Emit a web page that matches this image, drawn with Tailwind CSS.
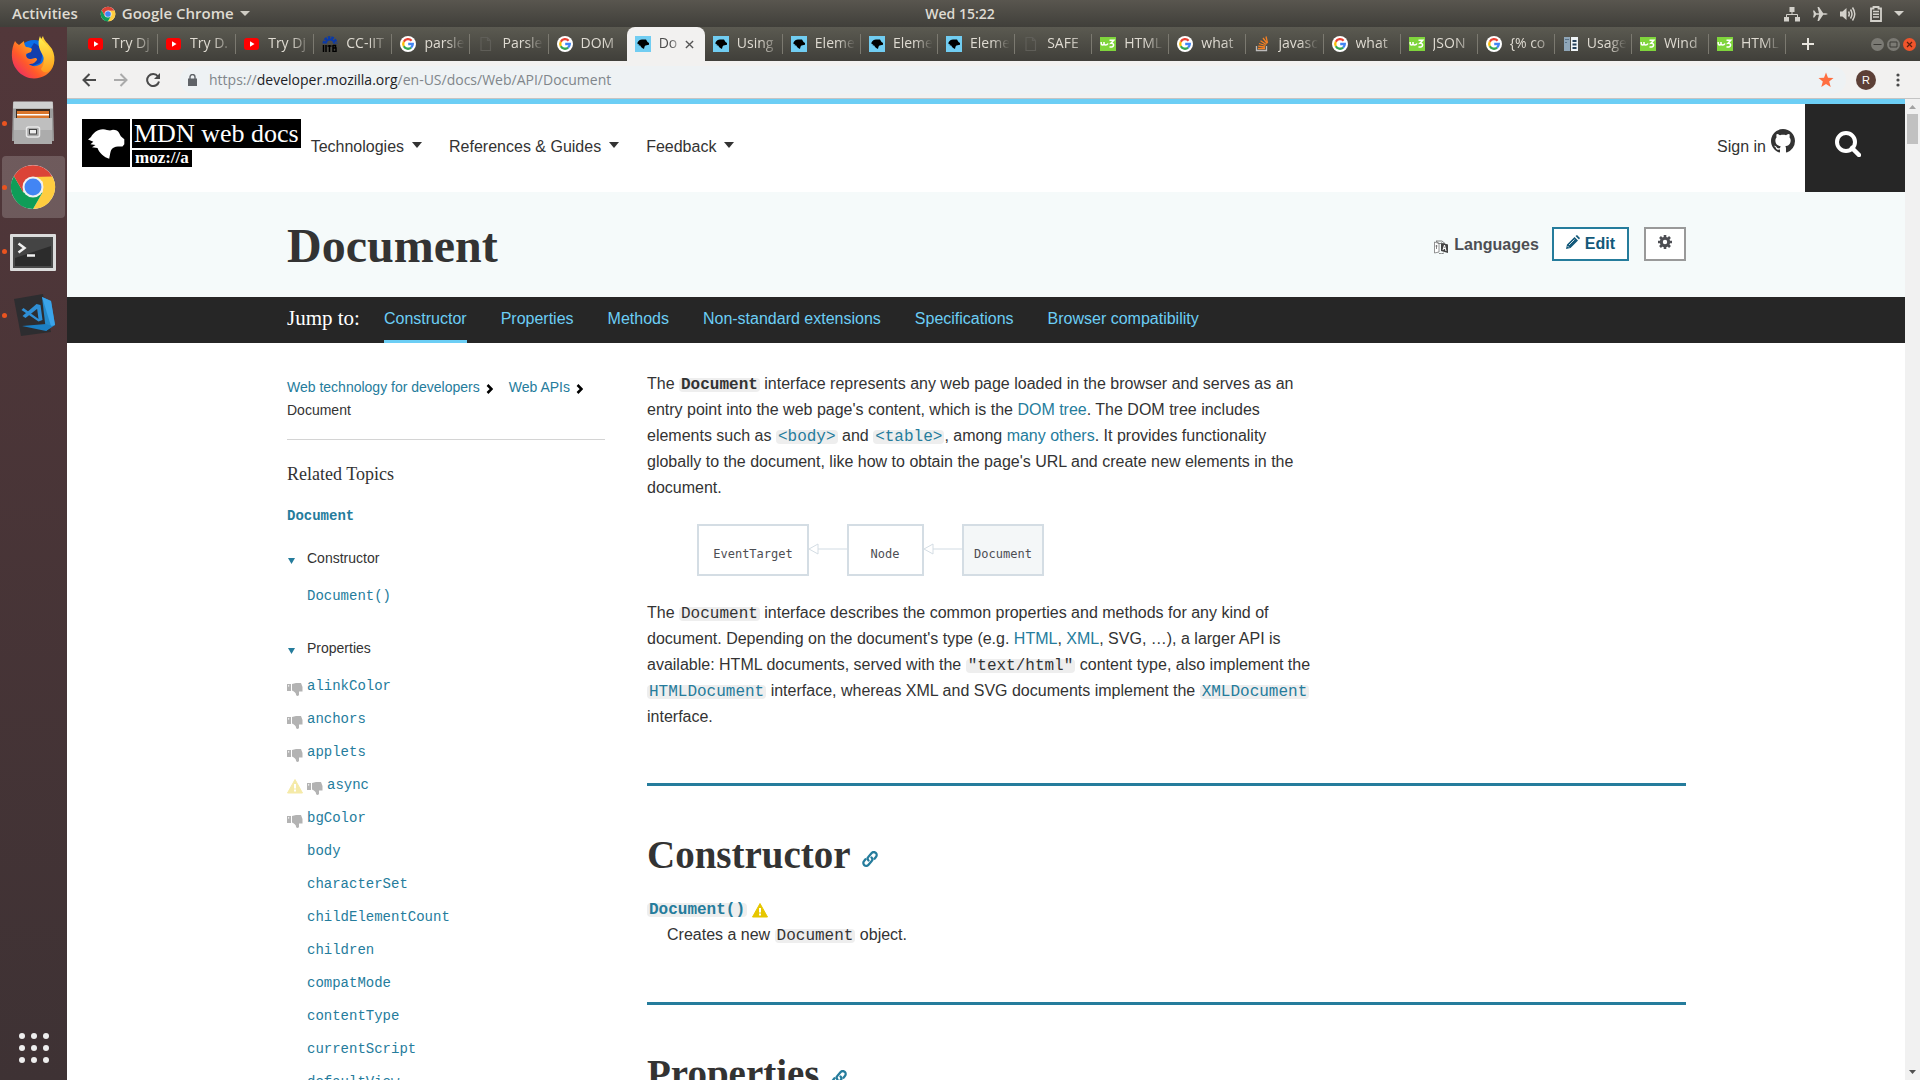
<!DOCTYPE html>
<html lang="en">
<head>
<meta charset="utf-8">
<title>Document - Web APIs | MDN</title>
<script src="https://cdn.jsdelivr.net/npm/@tailwindcss/browser@4"></script>
</head>
<body class="flex h-screen flex-col overflow-hidden bg-white font-['Liberation_Sans',sans-serif] text-base text-[#333]">

<!-- Shared symbols -->
<svg class="hidden" aria-hidden="true">
  <symbol id="i-yt" viewBox="0 0 16 16"><rect y="2" width="15" height="12" rx="3" fill="#f00"/><path d="M6 5.300l4.500 2.700L6 10.700z" fill="#fff"/></symbol>
  <symbol id="i-g" viewBox="0 0 16 16"><circle cx="8" cy="8" r="8" fill="#fff"/><g fill="none" stroke-width="2.300"><path d="M11.600 4.700A4.800 4.800 0 0 0 3.800 5.700" stroke="#ea4335"/><path d="M3.800 5.700a4.800 4.800 0 0 0 0 4.600" stroke="#fbbc05"/><path d="M3.800 10.300a4.800 4.800 0 0 0 7.300 1.300" stroke="#34a853"/><path d="M11.100 11.600A4.800 4.800 0 0 0 12.800 8H8.200" stroke="#4285f4"/></g></symbol>
  <symbol id="i-dino" viewBox="0 0 48 48"><path d="M6 20.500L9 18C11 14 15 10.500 21 10.200c3 0 5 1.300 7 1.300l3-.8c3 0 5 1.300 6 3l1.800 3.600 3.500 3v5L40.500 27.500H36c-3 0-5.500 1.200-6.800 3.500-1 2-1.200 5-2 8.800C22 38 17.500 34.500 15.500 29L10 28.300l3.500-2.300-5-.8 2.800-2.400z" fill="currentColor"/></symbol>
  <symbol id="i-mdn" viewBox="0 0 16 16"><path fill="#71cdf2" d="M0 0h16v16H0z"/><path d="M2.500 6.500C3.500 4.500 5 3.500 7 3.500h4L12.500 6 14 7v1.800l-3.500.6C9.500 10 9.300 11.500 9 13 7 12.300 5.800 11 5.200 9.500L3.500 9.200l.8-.8L2.500 8z"/></symbol>
  <symbol id="i-w3" viewBox="0 0 16 16"><path fill="#7fd53c" d="M0 1h16v14H0z"/><path d="M1.200 6v1.500c0 2 2.800 2 2.800 0V6v1.500c0 2 3 2 4 0M9.500 4.300h4.200L11 7.200c3.800-.5 3.500 5-1.500 3.500" fill="none" stroke="#fff" stroke-width="1.500"/></symbol>
  <symbol id="i-file" viewBox="0 0 16 16"><path d="M3 1.500h6.500l3 3v10H3zM9.500 1.500v3h3" fill="none" stroke="#5f5e58" stroke-width="1.200"/></symbol>
  <symbol id="i-iitb" viewBox="0 0 16 16"><path d="M2 7.500a6 6 0 0 1 12 0" fill="none" stroke="#0b3aa8" stroke-width="3" stroke-dasharray="2.500 1"/><path d="M4 7.500a4 4 0 0 1 8 0" fill="none" stroke="#0b3aa8" stroke-width="2"/><path d="M1.500 9v7M4 9v7M5.500 10h4M7.500 9v7M11 9v7M11 9.500h2.500v2.500H11h3v3.500h-3" fill="none" stroke="#000" stroke-width="1.500"/></symbol>
  <symbol id="i-so" viewBox="0 0 16 16"><path d="M2.500 10v4.500h10V10" fill="none" stroke="#bcbbbb" stroke-width="1.300"/><path d="M4 12.500h7M4.200 10.200l6.800.8M5 7.500l6.500 2M6.500 4.800l5.800 3.700M9 2l4.200 5.500M12 .5l1.500 6.500" stroke="#f48024" stroke-width="1.300"/></symbol>
  <symbol id="i-usage" viewBox="0 0 16 16"><path fill="#8fa6b8" d="M1 1h6v14H1z"/><path fill="#eef3f6" d="M8 1h7v14H8z"/><path d="M2.500 3h1v1h-1zM4.500 3h1v1h-1zM2.500 6h1v1h-1zM9.500 4h4v2h-4zM9.500 7.500h4v2h-4zM9.500 11h4v2h-4z" fill="#26415a"/></symbol>
  <symbol id="i-chrome" viewBox="0 0 48 48"><circle cx="24" cy="24" r="22" fill="#fff"/><path d="M43.100 13A22 22 0 0 1 24 46L33.500 29.500 33.500 18.500 24 13z" fill="#ffcd40"/><path d="M4.900 13A22 22 0 0 0 24 46l9.500-16.500H24L14.500 29.500z" fill="#0f9d58"/><path d="M4.900 13A22 22 0 0 1 43.100 13.500L24 14 14 29z" fill="#db4437"/><circle cx="24" cy="24" r="10.500" fill="#f1f1f1"/><circle cx="24" cy="24" r="8.500" fill="#4285f4"/></symbol>
  <symbol id="i-thumb" viewBox="0 0 16 16"><path d="M0 3h4v7H0zM5 3l4-1h5l1.500 4v4.500H12V14c-1 1.500-3 1-3-.5 0-2-2-3-4-4z" fill="#b3b3b3"/><path d="M1 4.200h1.200v1.200H1z" fill="#fff"/></symbol>
  <symbol id="i-warn" viewBox="0 0 16 16"><path d="M8 1.500L15.500 15H.5z" fill="currentColor" stroke="currentColor" stroke-linejoin="round"/><path d="M7 6h2v4.500H7zM7 11.500h2v2H7z" fill="#fff"/></symbol>
  <symbol id="i-link" viewBox="0 0 16 16"><g fill="none" stroke="currentColor" stroke-width="2.300" stroke-linecap="round"><path d="M6.500 9.500a2.700 2.700 0 0 1 0-3.800l3.200-3.600a2.800 2.800 0 0 1 4.200 3.900L12.500 7.700"/><path d="M9.500 6.500a2.700 2.700 0 0 1 0 3.800l-3.200 3.600a2.800 2.800 0 0 1-4.200-3.900L3.500 8.300"/></g></symbol>
</svg>

<!-- Desktop top bar -->
<header class="flex h-[27px] shrink-0 items-center bg-linear-to-b from-[#59564f] to-[#403f3a] px-3 font-['Open_Sans',sans-serif] text-[14px] font-semibold text-[#dfdbd2]">
  <div class="flex flex-1 items-center text-[15px]">
    <button class="mr-[22px]">Activities</button>
    <svg class="mr-1.5 size-4"><use href="#i-chrome"/></svg>
    <button class="flex items-center gap-1.5">Google Chrome<svg class="h-[5px] w-[10px]" viewBox="0 0 10 5"><path d="M0 0h10L5 5z" fill="#cfccc4"/></svg></button>
  </div>
  <time>Wed 15:22</time>
  <div class="flex flex-1 items-center justify-end gap-3 text-[#d3d1cb]">
    <svg class="size-4" viewBox="0 0 16 16" fill="currentColor"><path d="M5.500 1h5v5h-5zM0 11h5v4.500H0zM11 11h5v4.500h-5z"/><path d="M8 5v4M2.500 11V8.500h11V11" fill="none" stroke="currentColor"/></svg>
    <svg class="size-4" viewBox="0 0 16 16" fill="currentColor"><path d="M1 4.500h1.300l2 2.700H7L5.500 1H7l4.200 6.200H14l2 .8-2 .8h-2.800L7 15H5.500L7 8.800H4.300l-2 2.700H1L1.800 8z"/></svg>
    <svg class="size-4" viewBox="0 0 16 16"><path d="M0 5.500h2.500L6.500 2v12l-4-3.500H0z" fill="currentColor"/><path d="M8.500 5.500q1.500 2.500 0 5M10.500 3.500q3 4.500 0 9M12.500 1.500q4.500 6.500 0 13" fill="none" stroke="currentColor" stroke-width="1.500"/></svg>
    <svg class="ml-0.5 h-4 w-3" viewBox="0 0 12 16"><path d="M1 2.500h2.500V1h5v1.500H11V15H1z" fill="none" stroke="currentColor" stroke-width="1.800"/><path d="M3 5.500h6M3 8.300h6M3 11.100h6" stroke="currentColor" stroke-width="1.500"/></svg>
    <svg class="mr-1 h-[5px] w-[10px]" viewBox="0 0 10 5"><path d="M0 0h10L5 5z" fill="currentColor"/></svg>
  </div>
</header>

<div class="flex min-h-0 flex-1">
  <!-- Dock -->
  <nav aria-label="Dock" class="flex w-[67px] shrink-0 flex-col bg-linear-to-b from-[#52373a] to-[#3e3234]">
    <a href="#" aria-label="Firefox" class="flex h-16 items-center justify-center">
      <svg class="size-12" viewBox="0 0 48 48"><defs><linearGradient id="fx" x1="1" y1="0" x2="0" y2="1"><stop offset="0" stop-color="#fff04a"/><stop offset=".35" stop-color="#ffb01e"/><stop offset=".65" stop-color="#ff5a2a"/><stop offset="1" stop-color="#e5197e"/></linearGradient><linearGradient id="fy" x1="0" y1="0" x2="0" y2="1"><stop offset="0" stop-color="#fff44f"/><stop offset="1" stop-color="#ff9a1e"/></linearGradient></defs><circle cx="24" cy="22" r="17" fill="#0a6fe8"/><path d="M24 8c8 3 10 12 6 20l-10 4-6-8z" fill="#123fae"/><path d="M5 6c1 2 3 3 4 4l5-4c0 3 1 5 2 6 3 0 5 1 6 2l-1 3-5 2c0 4 2 5 5 5l4-1c2 0 3 2 1 3-2 3-5 3-7 3 4 4 12 2 14-3 3-7-1-10-3-13-2-6 2-10 3-12 1 5 5 7 9 13 5 10 2 21-6 26-10 6-22 4-29-5C0 27 1 14 5 6z" fill="url(#fx)"/><path d="M30 1c1 5 7 8 10 13 3 6 4 15 0 21-4 4-8 2-9-1 5-7 3-12 0-17-3-6-3-11-1-16z" fill="url(#fy)"/></svg>
    </a>
    <a href="#" aria-label="Files" class="flex h-16 items-center gap-[5px]">
      <span class="ml-0.5 size-[5px] rounded-full bg-[#e95420]"></span>
      <svg class="h-[44px] w-[42px]" viewBox="0 0 42 44"><path d="M1 1h40l1 39H0z" fill="#9d9d9d"/><path d="M1.500.5h39l.5 7H1z" fill="#d0d0d0"/><path d="M4 8h34v10H4z" fill="#3a2a20"/><path d="M5 10h32v8H5z" fill="#d9752b"/><path d="M5 13h32v1.500H5z" fill="#fff"/><path d="M2 17h38v26H2z" fill="#acacac"/><path d="M2 17h38v12H2z" fill="#bfbfbf"/><rect x="14.500" y="26" width="13" height="10" rx="2" fill="#aaa" stroke="#e8e8e8" stroke-width="1.500"/><rect x="17.500" y="28.500" width="7" height="4.500" fill="#eee" stroke="#444"/></svg>
    </a>
    <a href="#" aria-label="Google Chrome" class="mx-0.5 my-px flex h-[62px] items-center rounded bg-white/18">
      <span class="size-[5px] rounded-full bg-[#e95420]"></span>
      <svg class="ml-0.5 size-12"><use href="#i-chrome"/></svg>
    </a>
    <a href="#" aria-label="Terminal" class="flex h-16 items-center gap-[3px]">
      <span class="ml-0.5 size-[5px] rounded-full bg-[#e95420]"></span>
      <svg class="mt-1 h-[38px] w-[46px]" viewBox="0 0 46 38"><rect width="46" height="37" rx="1" fill="#dcdcdc"/><path d="M3 3h40v31H3z" fill="#4a4a4a"/><path d="M5 5h36v27H5z" fill="#2c2c2c"/><path d="M5 5h36v7L5 24z" fill="#444"/><path d="M8.500 9.500l6 4.500-6 4.500M17 21.500h8" fill="none" stroke="#f0f0f0" stroke-width="2.500"/></svg>
    </a>
    <a href="#" aria-label="Visual Studio Code" class="flex h-16 items-center gap-1.5">
      <span class="ml-0.5 size-[5px] rounded-full bg-[#e95420]"></span>
      <svg class="h-[44px] w-[44px]" viewBox="0 0 44 44"><path d="M1 6L30 1l8 38L8 43z" fill="#2d2d30"/><path d="M29 4l9 4 4 24-9 6z" fill="#2489ca"/><path d="M29 4l9 4 4 24-4 1z" fill="#3ba4ea"/><path d="M9 33l24-2 6 2-6 5z" fill="#1b7fc4"/><path d="M23.500 11l4 1 2 15-4 1.500L8.500 17l2-2 15 11zM23.500 11l3 3-14 11-3-2z" fill="#2f8fd6"/></svg>
    </a>
    <button aria-label="Show applications" class="mt-auto flex h-16 items-center justify-center">
      <svg class="size-[30px]" viewBox="0 0 30 30" fill="#eee"><circle cx="3" cy="3" r="3"/><circle cx="15" cy="3" r="3"/><circle cx="27" cy="3" r="3"/><circle cx="3" cy="15" r="3"/><circle cx="15" cy="15" r="3"/><circle cx="27" cy="15" r="3"/><circle cx="3" cy="27" r="3"/><circle cx="15" cy="27" r="3"/><circle cx="27" cy="27" r="3"/></svg>
    </button>
  </nav>

  <!-- Browser window -->
  <div class="flex min-w-0 flex-1 flex-col">
    <!-- Tab strip -->
    <div class="flex h-[34px] shrink-0 bg-linear-to-b from-[#5b5a51] to-[#403f3a] pl-[13px] font-['Open_Sans',sans-serif] text-[14px]/[32px] text-[#dfdbd2]">
      <div class="flex min-w-0 flex-1">
        <div class="flex min-w-0 flex-[78] items-center"><svg class="mx-2 size-4 shrink-0"><use href="#i-yt"/></svg><span class="flex-1 overflow-hidden pb-0.5 whitespace-nowrap [mask-image:linear-gradient(to_right,black_50%,transparent_100%)]">Try Dj</span><i class="h-5 w-px bg-[#7b7970]"></i></div>
        <div class="flex min-w-0 flex-[78] items-center"><svg class="mx-2 size-4 shrink-0"><use href="#i-yt"/></svg><span class="flex-1 overflow-hidden pb-0.5 whitespace-nowrap [mask-image:linear-gradient(to_right,black_50%,transparent_100%)]">Try D.</span><i class="h-5 w-px bg-[#7b7970]"></i></div>
        <div class="flex min-w-0 flex-[78] items-center"><svg class="mx-2 size-4 shrink-0"><use href="#i-yt"/></svg><span class="flex-1 overflow-hidden pb-0.5 whitespace-nowrap [mask-image:linear-gradient(to_right,black_50%,transparent_100%)]">Try Dj</span><i class="h-5 w-px bg-[#7b7970]"></i></div>
        <div class="flex min-w-0 flex-[78] items-center"><svg class="mx-2 size-4 shrink-0"><use href="#i-iitb"/></svg><span class="flex-1 overflow-hidden pb-0.5 whitespace-nowrap [mask-image:linear-gradient(to_right,black_50%,transparent_100%)]">CC-IIT</span><i class="h-5 w-px bg-[#7b7970]"></i></div>
        <div class="flex min-w-0 flex-[78] items-center"><svg class="mx-2 size-4 shrink-0"><use href="#i-g"/></svg><span class="flex-1 overflow-hidden pb-0.5 whitespace-nowrap [mask-image:linear-gradient(to_right,black_50%,transparent_90%)]">parsle</span><i class="h-5 w-px bg-[#7b7970]"></i></div>
        <div class="flex min-w-0 flex-[78] items-center"><svg class="mx-2 size-4 shrink-0"><use href="#i-file"/></svg><span class="flex-1 overflow-hidden pb-0.5 whitespace-nowrap [mask-image:linear-gradient(to_right,black_50%,transparent_90%)]">Parsle</span><i class="h-5 w-px bg-[#7b7970]"></i></div>
        <div class="flex min-w-0 flex-[78] items-center"><svg class="mx-2 size-4 shrink-0"><use href="#i-g"/></svg><span class="flex-1 overflow-hidden pb-0.5 whitespace-nowrap [mask-image:linear-gradient(to_right,black_50%,transparent_110%)]">DOM</span></div>
        <div class="flex min-w-0 flex-[78] items-center rounded-t-lg bg-[#f2f1f0] text-[#4c4c4c]"><svg class="mx-2 size-4 shrink-0"><use href="#i-mdn"/></svg><span class="flex-1 overflow-hidden pb-0.5 whitespace-nowrap [mask-image:linear-gradient(to_right,black_50%,transparent_110%)]">Do</span><button aria-label="Close tab" class="mr-[11px] ml-1"><svg class="size-[9px]" viewBox="0 0 10 10"><path d="M1 1l8 8M9 1L1 9" stroke="#555" stroke-width="1.500"/></svg></button></div>
        <div class="flex min-w-0 flex-[78] items-center"><svg class="mx-2 size-4 shrink-0"><use href="#i-mdn"/></svg><span class="flex-1 overflow-hidden pb-0.5 whitespace-nowrap [mask-image:linear-gradient(to_right,black_50%,transparent_100%)]">Using</span><i class="h-5 w-px bg-[#7b7970]"></i></div>
        <div class="flex min-w-0 flex-[78] items-center"><svg class="mx-2 size-4 shrink-0"><use href="#i-mdn"/></svg><span class="flex-1 overflow-hidden pb-0.5 whitespace-nowrap [mask-image:linear-gradient(to_right,black_50%,transparent_90%)]">Eleme</span><i class="h-5 w-px bg-[#7b7970]"></i></div>
        <div class="flex min-w-0 flex-[77] items-center"><svg class="mx-2 size-4 shrink-0"><use href="#i-mdn"/></svg><span class="flex-1 overflow-hidden pb-0.5 whitespace-nowrap [mask-image:linear-gradient(to_right,black_50%,transparent_90%)]">Eleme</span><i class="h-5 w-px bg-[#7b7970]"></i></div>
        <div class="flex min-w-0 flex-[77] items-center"><svg class="mx-2 size-4 shrink-0"><use href="#i-mdn"/></svg><span class="flex-1 overflow-hidden pb-0.5 whitespace-nowrap [mask-image:linear-gradient(to_right,black_50%,transparent_90%)]">Eleme</span><i class="h-5 w-px bg-[#7b7970]"></i></div>
        <div class="flex min-w-0 flex-[77] items-center"><svg class="mx-2 size-4 shrink-0"><use href="#i-file"/></svg><span class="flex-1 overflow-hidden pb-0.5 whitespace-nowrap [mask-image:linear-gradient(to_right,black_50%,transparent_110%)]">SAFE</span><i class="h-5 w-px bg-[#7b7970]"></i></div>
        <div class="flex min-w-0 flex-[77] items-center"><svg class="mx-2 size-4 shrink-0"><use href="#i-w3"/></svg><span class="flex-1 overflow-hidden pb-0.5 whitespace-nowrap [mask-image:linear-gradient(to_right,black_50%,transparent_90%)]">HTML</span><i class="h-5 w-px bg-[#7b7970]"></i></div>
        <div class="flex min-w-0 flex-[77] items-center"><svg class="mx-2 size-4 shrink-0"><use href="#i-g"/></svg><span class="flex-1 overflow-hidden pb-0.5 whitespace-nowrap [mask-image:linear-gradient(to_right,black_50%,transparent_110%)]">what</span><i class="h-5 w-px bg-[#7b7970]"></i></div>
        <div class="flex min-w-0 flex-[77] items-center"><svg class="mx-2 size-4 shrink-0"><use href="#i-so"/></svg><span class="flex-1 overflow-hidden pb-0.5 whitespace-nowrap [mask-image:linear-gradient(to_right,black_50%,transparent_90%)]">javasc</span><i class="h-5 w-px bg-[#7b7970]"></i></div>
        <div class="flex min-w-0 flex-[77] items-center"><svg class="mx-2 size-4 shrink-0"><use href="#i-g"/></svg><span class="flex-1 overflow-hidden pb-0.5 whitespace-nowrap [mask-image:linear-gradient(to_right,black_50%,transparent_110%)]">what</span><i class="h-5 w-px bg-[#7b7970]"></i></div>
        <div class="flex min-w-0 flex-[77] items-center"><svg class="mx-2 size-4 shrink-0"><use href="#i-w3"/></svg><span class="flex-1 overflow-hidden pb-0.5 whitespace-nowrap [mask-image:linear-gradient(to_right,black_50%,transparent_100%)]">JSON</span><i class="h-5 w-px bg-[#7b7970]"></i></div>
        <div class="flex min-w-0 flex-[77] items-center"><svg class="mx-2 size-4 shrink-0"><use href="#i-g"/></svg><span class="flex-1 overflow-hidden pb-0.5 whitespace-nowrap [mask-image:linear-gradient(to_right,black_50%,transparent_110%)]">{% co</span><i class="h-5 w-px bg-[#7b7970]"></i></div>
        <div class="flex min-w-0 flex-[77] items-center"><svg class="mx-2 size-4 shrink-0"><use href="#i-usage"/></svg><span class="flex-1 overflow-hidden pb-0.5 whitespace-nowrap [mask-image:linear-gradient(to_right,black_50%,transparent_90%)]">Usage</span><i class="h-5 w-px bg-[#7b7970]"></i></div>
        <div class="flex min-w-0 flex-[77] items-center"><svg class="mx-2 size-4 shrink-0"><use href="#i-w3"/></svg><span class="flex-1 overflow-hidden pb-0.5 whitespace-nowrap [mask-image:linear-gradient(to_right,black_50%,transparent_110%)]">Wind</span><i class="h-5 w-px bg-[#7b7970]"></i></div>
        <div class="flex min-w-0 flex-[77] items-center"><svg class="mx-2 size-4 shrink-0"><use href="#i-w3"/></svg><span class="flex-1 overflow-hidden pb-0.5 whitespace-nowrap [mask-image:linear-gradient(to_right,black_50%,transparent_90%)]">HTML</span><i class="h-5 w-px bg-[#7b7970]"></i></div>
      </div>
      <div class="flex w-[134px] items-center pr-1 pl-4">
        <button aria-label="New tab"><svg class="size-3" viewBox="0 0 12 12"><path d="M6 0v12M0 6h12" stroke="#e8e5de" stroke-width="2"/></svg></button>
        <div class="ml-auto flex gap-[3px]">
          <button aria-label="Minimize" class="size-[13px]"><svg viewBox="0 0 13 13"><circle cx="6.500" cy="6.500" r="6.500" fill="#7b7a74"/><path d="M2.500 6.500h8" stroke="#3c3b37"/></svg></button>
          <button aria-label="Maximize" class="size-[13px]"><svg viewBox="0 0 13 13"><circle cx="6.500" cy="6.500" r="6.500" fill="#7b7a74"/><path d="M3 4h7v5H3z" fill="none" stroke="#3c3b37"/></svg></button>
          <button aria-label="Close" class="size-[13px]"><svg viewBox="0 0 13 13"><circle cx="6.500" cy="6.500" r="6.500" fill="#f0542b"/><path d="M4 4l5 5M9 4L4 9" stroke="#5b2010" stroke-width="1.200"/></svg></button>
        </div>
      </div>
    </div>

    <!-- Toolbar -->
    <div class="flex h-[38px] shrink-0 items-center border-b border-[#c4c4c4] bg-[#f2f1f0] pr-5 pl-[15px]">
      <button aria-label="Back"><svg class="size-[14px]" viewBox="0 0 14 14"><path d="M14 7H1.500M7.500 1l-6 6 6 6" fill="none" stroke="#4a4a4a" stroke-width="2"/></svg></button>
      <button aria-label="Forward" class="ml-[18px]"><svg class="size-[14px]" viewBox="0 0 14 14"><path d="M0 7h12.500M6.500 1l6 6-6 6" fill="none" stroke="#aaa" stroke-width="2"/></svg></button>
      <button aria-label="Reload" class="ml-[18px]"><svg class="size-[14px]" viewBox="0 0 14 14"><path d="M12 3.500A6 6 0 1 0 13 8.500" fill="none" stroke="#4a4a4a" stroke-width="2"/><path d="M14 0v6H8z" fill="#4a4a4a"/></svg></button>
      <div class="ml-5 flex h-7 flex-1 items-center rounded-full bg-[#eef2f4] pr-3 pl-2">
        <svg class="mr-3 h-3 w-[9px] shrink-0" viewBox="0 0 9 12"><path d="M0 4.500h9V12H0z" fill="#5f6368"/><path d="M2 5V3a2.500 2.500 0 0 1 5 0v2" fill="none" stroke="#5f6368" stroke-width="1.400"/></svg>
        <div class="flex-1 font-['Open_Sans',sans-serif] text-[14px] whitespace-nowrap text-[#80868b]">https://<span class="text-[#202124]">developer.mozilla.org</span>/en-US/docs/Web/API/Document</div>
        <svg class="size-4" viewBox="0 0 16 16"><path d="M8 .5l2 5.300 5.500.2-4.300 3.500 1.500 5.500L8 12l-4.700 3 1.500-5.500L.5 6 6 5.800z" fill="#ff6e40"/></svg>
      </div>
      <button aria-label="Profile" class="ml-2.5 size-5 rounded-full bg-[#5d4037] text-[11px]/5 text-white">R</button>
      <button aria-label="Menu" class="ml-5"><svg class="h-[14px] w-1" viewBox="0 0 4 14" fill="#4a4a4a"><circle cx="2" cy="2" r="1.600"/><circle cx="2" cy="7" r="1.600"/><circle cx="2" cy="12" r="1.600"/></svg></button>
    </div>

    <!-- Page viewport -->
    <div class="flex min-h-0 flex-1">
      <div class="min-w-0 flex-1 overflow-hidden border-t-[5px] border-[#6ccef5]">
        <header class="flex h-[88px]">
          <a href="#" aria-label="MDN web docs" class="mt-[15px] ml-[15px] flex h-12 gap-0.5 text-white">
            <svg class="size-12 bg-black"><use href="#i-dino"/></svg>
            <span class="flex flex-col items-start gap-0.5 font-['Liberation_Serif',serif]">
              <span class="h-[29px] bg-black px-0.5 text-[26px]/[30px]">MDN web docs</span>
              <span class="h-[17px] bg-black px-[3px] text-[17px]/[15px] font-bold">moz://a</span>
            </span>
          </a>
          <nav aria-label="Main" class="mt-[31px] ml-2.5 flex h-6 gap-[27px]">
            <button class="flex items-center gap-2">Technologies<svg class="mb-1 h-[6px] w-[10px]" viewBox="0 0 10 6"><path d="M0 0h10L5 6z" fill="#333"/></svg></button>
            <button class="flex items-center gap-2">References &amp; Guides<svg class="mb-1 h-[6px] w-[10px]" viewBox="0 0 10 6"><path d="M0 0h10L5 6z" fill="#333"/></svg></button>
            <button class="flex items-center gap-2">Feedback<svg class="mb-1 h-[6px] w-[10px]" viewBox="0 0 10 6"><path d="M0 0h10L5 6z" fill="#333"/></svg></button>
          </nav>
          <a href="#" class="mt-[25px] mr-[10px] ml-auto flex h-6 gap-[5px] leading-9">Sign in
            <svg class="size-6" viewBox="0 0 16 16" fill="#333"><path d="M8 0C3.580 0 0 3.580 0 8c0 3.540 2.290 6.530 5.470 7.590.4.070.55-.17.55-.38 0-.19-.01-.82-.01-1.490-2.010.37-2.530-.49-2.690-.94-.09-.23-.48-.94-.82-1.130-.28-.15-.68-.52-.01-.53.63-.01 1.080.58 1.230.82.72 1.210 1.870.87 2.330.66.07-.52.28-.87.51-1.070-1.780-.2-3.640-.89-3.640-3.950 0-.87.31-1.590.82-2.150-.08-.2-.36-1.020.08-2.120 0 0 .67-.21 2.200.82.64-.18 1.320-.27 2-.27s1.360.09 2 .27c1.530-1.040 2.200-.82 2.200-.82.44 1.100.16 1.920.08 2.120.51.56.82 1.270.82 2.150 0 3.070-1.870 3.750-3.650 3.950.29.25.54.73.54 1.480 0 1.070-.01 1.930-.01 2.200 0 .21.15.46.55.38A8 8 0 0 0 16 8c0-4.420-3.580-8-8-8z"/></svg>
          </a>
          <button aria-label="Search" class="flex w-[100px] items-center justify-center bg-[#262626] pr-3.5 pb-2"><svg class="size-[26px]" viewBox="0 0 26 26"><circle cx="11" cy="11" r="9" fill="none" stroke="#fff" stroke-width="4"/><path d="M17 17l7 7" stroke="#fff" stroke-width="4.500" stroke-linecap="round"/></svg></button>
        </header>

        <div class="bg-[#f5fafa]">
          <div class="mx-auto flex h-[105px] max-w-[1400px] items-center pl-px">
            <h1 class="flex-1 pt-0.5 font-['Liberation_Serif',serif] text-[48px]/[56px] font-bold">Document</h1>
            <div class="flex items-center pb-0.5">
              <button class="mr-[13px] flex items-center gap-1.5 pt-0.5 font-bold text-[#4d4e53]"><svg class="mt-1 size-[14px]" viewBox="0 0 14 14"><path d="M.5 2L5 3.500V12L.5 13z" fill="#fff" stroke="#777" stroke-width=".8"/><path d="M7 2.500l7 2V13l-7-2z" fill="#444"/><path d="M2 1h6l3 2.500H5zM1.500 6h2M2.500 5v4M5 13.500q3 .8 5-.5" stroke="#666" stroke-width=".8" fill="none"/><path d="M9 10l1.500-5L12 11M9.500 8.500h2" stroke="#fff" fill="none"/></svg>Languages</button>
              <button class="mr-[15px] flex h-[34px] items-center gap-[5px] border-2 border-[#257c9c] bg-white px-3 font-bold text-[#13597a]"><svg class="mb-1 size-[14px]" viewBox="0 0 14 14" fill="currentColor"><path d="M0 14l1-4.500L8.500 2 12 5.500 4.500 13zM9.500 1L11 0l3 3-1 1.500z"/><path d="M1.500 11l1.500 1.500M3 10l5.500-5.500" stroke="#fff" stroke-width=".8"/></svg>Edit</button>
              <button aria-label="Settings" class="flex h-[34px] w-[42px] items-center justify-center border-2 border-[#999] bg-white pb-1"><svg class="size-[14px]" viewBox="0 0 14 14"><circle cx="7" cy="7" r="3.700" fill="none" stroke="#4d4e53" stroke-width="3"/><path d="M7 0v2.500M7 11.500V14M0 7h2.500M11.500 7H14M2 2l2 2M10 10l2 2M12 2l-2 2M4 10l-2 2" stroke="#4d4e53" stroke-width="2.600"/></svg></button>
            </div>
          </div>
        </div>

        <nav aria-label="Jump to" class="bg-[#262626]">
          <div class="mx-auto flex h-[46px] max-w-[1400px] pl-px text-[#6ccef5]">
            <span class="mr-6 font-['Liberation_Serif',serif] text-[21px]/[42px] text-white">Jump to:</span>
            <div class="flex gap-[34px] leading-[43px]">
              <a href="#" class="border-b-[3px] border-[#6ccef5]">Constructor</a>
              <a href="#">Properties</a>
              <a href="#">Methods</a>
              <a href="#">Non-standard extensions</a>
              <a href="#">Specifications</a>
              <a href="#">Browser compatibility</a>
            </div>
          </div>
        </nav>

        <div class="mx-auto flex max-w-[1400px] gap-[42px] pl-px">
          <aside class="w-[318px] shrink-0 pt-[33px] text-[14px]/[23px]">
            <ol class="flex flex-wrap items-center border-b border-[#d4d4d4] pb-[17px]">
              <li class="mr-4 flex items-center gap-1.5"><a href="#" class="text-[#257c9c]">Web technology for developers</a><svg class="mt-0.5 h-[10px] w-[7px]" viewBox="0 0 7 10"><path d="M1.500 1l4 4-4 4" fill="none" stroke="#000" stroke-width="2.500"/></svg></li>
              <li class="mr-4 flex items-center gap-1.5"><a href="#" class="text-[#257c9c]">Web APIs</a><svg class="mt-0.5 h-[10px] w-[7px]" viewBox="0 0 7 10"><path d="M1.500 1l4 4-4 4" fill="none" stroke="#000" stroke-width="2.500"/></svg></li>
              <li class="w-full">Document</li>
            </ol>
            <h2 class="mt-5 font-['Liberation_Serif',serif] text-[18px]/[28px]">Related Topics</h2>
            <a href="#" class="mt-[17px] block font-['Liberation_Mono',monospace] font-bold text-[#257c9c]">Document</a>
            <details open class="mt-[19px]">
              <summary class="flex list-none items-center"><svg class="mt-1 mr-3 ml-px h-[6px] w-[7px]" viewBox="0 0 7 6"><path d="M0 0h7L3.500 6z" fill="#257c9c"/></svg>Constructor</summary>
              <ul class="mt-2.5 pl-5 font-['Liberation_Mono',monospace] leading-[33px] text-[#257c9c]"><li><a href="#">Document()</a></li></ul>
            </details>
            <details open class="mt-6">
              <summary class="flex list-none items-center"><svg class="mt-1 mr-3 ml-px h-[6px] w-[7px]" viewBox="0 0 7 6"><path d="M0 0h7L3.500 6z" fill="#257c9c"/></svg>Properties</summary>
              <ul class="mt-2.5 font-['Liberation_Mono',monospace] leading-[33px] text-[#257c9c]">
                <li class="flex items-center gap-1"><svg class="mt-1 size-4"><use href="#i-thumb"/></svg><a href="#">alinkColor</a></li>
                <li class="flex items-center gap-1"><svg class="mt-1 size-4"><use href="#i-thumb"/></svg><a href="#">anchors</a></li>
                <li class="flex items-center gap-1"><svg class="mt-1 size-4"><use href="#i-thumb"/></svg><a href="#">applets</a></li>
                <li class="flex items-center gap-1"><svg class="size-4 text-[#f5eaa8]"><use href="#i-warn"/></svg><svg class="mt-1 size-4"><use href="#i-thumb"/></svg><a href="#">async</a></li>
                <li class="flex items-center gap-1"><svg class="mt-1 size-4"><use href="#i-thumb"/></svg><a href="#">bgColor</a></li>
                <li class="pl-5"><a href="#">body</a></li>
                <li class="pl-5"><a href="#">characterSet</a></li>
                <li class="pl-5"><a href="#">childElementCount</a></li>
                <li class="pl-5"><a href="#">children</a></li>
                <li class="pl-5"><a href="#">compatMode</a></li>
                <li class="pl-5"><a href="#">contentType</a></li>
                <li class="pl-5"><a href="#">currentScript</a></li>
                <li class="pl-5"><a href="#">defaultView</a></li>
              </ul>
            </details>
          </aside>

          <main class="min-w-0 flex-1 pt-7 leading-[26px]">
            <p class="max-w-2xl">The <code class="inline-block rounded-sm bg-[#eee] px-0.5 font-['Liberation_Mono',monospace] text-base leading-[14px] font-bold">Document</code> interface represents any web page loaded in the browser and serves as an entry point into the web page's content, which is the <a href="#" class="text-[#257c9c]">DOM tree</a>. The DOM tree includes elements such as <a href="#" class="text-[#257c9c]"><code class="inline-block rounded-sm bg-[#eee] px-0.5 font-['Liberation_Mono',monospace] text-base leading-[14px]">&lt;body&gt;</code></a> and <a href="#" class="text-[#257c9c]"><code class="inline-block rounded-sm bg-[#eee] px-0.5 font-['Liberation_Mono',monospace] text-base leading-[14px]">&lt;table&gt;</code></a>, among <a href="#" class="text-[#257c9c]">many others</a>. It provides functionality globally to the document, like how to obtain the page's URL and create new elements in the document.</p>
            <svg class="mt-[23px] ml-[50px] block h-[52px] w-[350px]" viewBox="0 0 350 52" font-family="'DejaVu Sans Mono', monospace" font-size="12" fill="#4d4e53" text-anchor="middle">
              <g fill="#fff" stroke="#d4dde4" stroke-width="2"><path d="M1 1h110v50H1zM151 1h75v50h-75z"/><path d="M266 1h80v50h-80z" fill="#f4f7f8"/></g>
              <g fill="#fff" stroke="#d4dde4"><path d="M121 25h29M236 25h29" stroke-width="2" stroke="#e8edf1"/><path d="M112 25l9-5v10zM227 25l9-5v10z"/></g>
              <text x="56" y="34">EventTarget</text><text x="188" y="34">Node</text><text x="306" y="34">Document</text>
            </svg>
            <p class="mt-6 max-w-2xl">The <code class="inline-block rounded-sm bg-[#eee] px-0.5 font-['Liberation_Mono',monospace] text-base leading-[14px]">Document</code> interface describes the common properties and methods for any kind of document. Depending on the document's type (e.g. <a href="#" class="text-[#257c9c]">HTML</a>, <a href="#" class="text-[#257c9c]">XML</a>, SVG, …), a larger API is available: HTML documents, served with the <code class="inline-block rounded-sm bg-[#eee] px-0.5 font-['Liberation_Mono',monospace] text-base leading-[14px]">"text/html"</code> content type, also implement the <a href="#" class="text-[#257c9c]"><code class="inline-block rounded-sm bg-[#eee] px-0.5 font-['Liberation_Mono',monospace] text-base leading-[14px]">HTMLDocument</code></a> interface, whereas XML and SVG documents implement the <a href="#" class="text-[#257c9c]"><code class="inline-block rounded-sm bg-[#eee] px-0.5 font-['Liberation_Mono',monospace] text-base leading-[14px]">XMLDocument</code></a> interface.</p>

            <section class="mt-[53px] border-t-[3px] border-[#257c9c] pt-[45px]">
              <h2 class="flex items-center gap-[11px] font-['Liberation_Serif',serif] text-[39px]/[48px] font-bold">Constructor<a href="#" aria-label="Permalink to Constructor" class="mt-2 text-[#257c9c]"><svg class="size-4"><use href="#i-link"/></svg></a></h2>
              <dl class="mt-[17px]">
                <dt class="flex items-center gap-[5px]"><a href="#" class="text-[#257c9c]"><code class="inline-block rounded-sm bg-[#eee] px-0.5 font-['Liberation_Mono',monospace] text-base leading-[14px] font-bold">Document()</code></a><svg class="mt-0.5 size-4 text-[#e6c600]"><use href="#i-warn"/></svg></dt>
                <dd class="pl-5">Creates a new <code class="inline-block rounded-sm bg-[#eee] px-0.5 font-['Liberation_Mono',monospace] text-base leading-[14px]">Document</code> object.</dd>
              </dl>
            </section>
            <section class="mt-[54px] border-t-[3px] border-[#257c9c] pt-[45px]">
              <h2 class="flex items-center gap-[11px] font-['Liberation_Serif',serif] text-[39px]/[48px] font-bold">Properties<a href="#" aria-label="Permalink to Properties" class="mt-2 text-[#257c9c]"><svg class="size-4"><use href="#i-link"/></svg></a></h2>
            </section>
          </main>
        </div>
      </div>

      <!-- Scrollbar -->
      <div class="flex w-[15px] shrink-0 flex-col items-center bg-[#f1f1f1] py-[6px]">
        <svg class="h-1 w-[7px]" viewBox="0 0 7 4"><path d="M3.500 0L7 4H0z" fill="#a3a3a3"/></svg>
        <div class="mt-[5px] h-[30px] w-[11px] bg-[#c1c1c1]"></div>
        <svg class="mt-auto h-1 w-[7px]" viewBox="0 0 7 4"><path d="M0 0h7L3.500 4z" fill="#505050"/></svg>
      </div>
    </div>
  </div>
</div>
</body>
</html>
